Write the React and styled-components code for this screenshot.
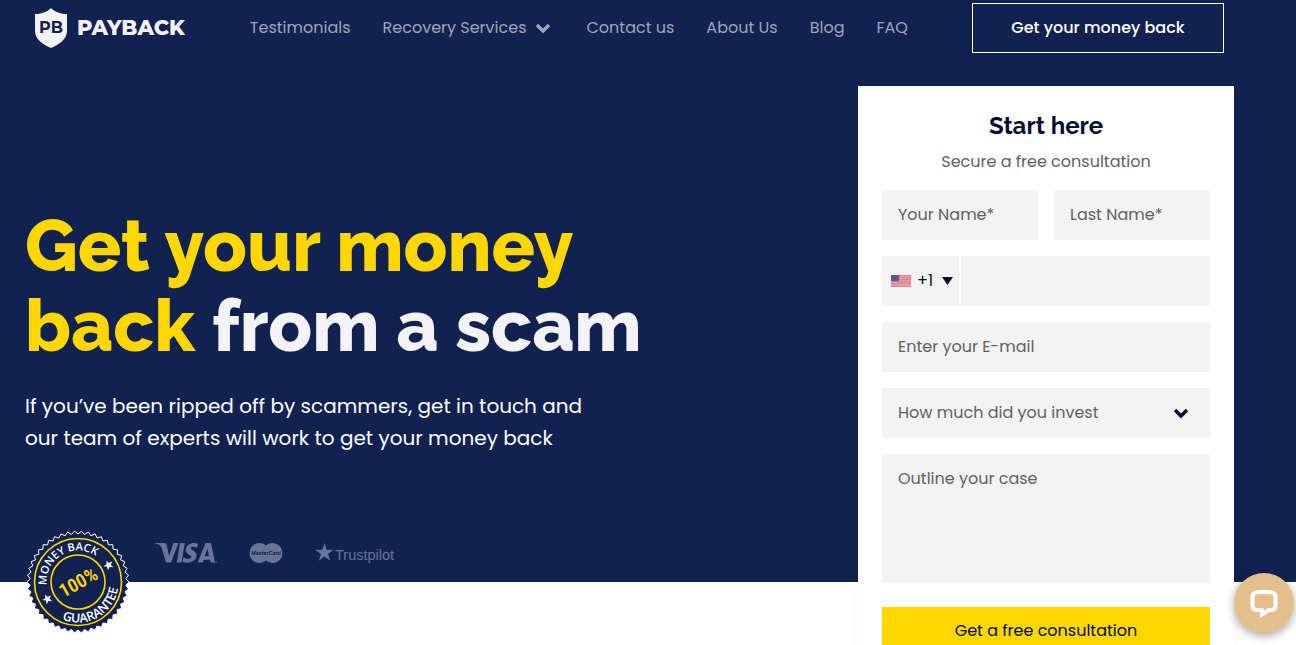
import React from 'react';
import styled, { createGlobalStyle } from 'styled-components';

const colors = {
    navy: '#112150',
    ink: '#000d2e',
    yellow: '#ffd700',
    light: '#f3f3f5',
    field: '#f3f3f3',
    link: '#a0a6b9',
    grey: '#616161',
};

const GlobalStyle = createGlobalStyle`
    * {
        box-sizing: border-box;
    }
    body {
        margin: 0;
        font-family: Poppins, Inter, 'Liberation Sans', sans-serif;
        font-size: 16px;
        line-height: 24px;
        background-color: white;
    }
    input,
    select,
    textarea,
    button {
        font: inherit;
    }
`;

const Page = styled.div`
    height: 100vh;
    overflow: hidden;
`;

const Hero = styled.div`
    background-color: ${colors.navy};
`;

const Header = styled.header`
    padding: 3px 72px 3px 35px;

    display: flex;
    align-items: center;
`;

const LogoLink = styled.a`
    margin-right: 65px;

    display: flex;
    align-items: center;
    gap: 10px;
    color: ${colors.light};
    font-family: Montserrat, Inter, sans-serif;
    font-size: 21px;
    font-weight: 800;
    text-decoration: none;
`;

const Nav = styled.nav`
    display: flex;
    gap: 32px;
`;

const NavLink = styled.a`
    display: flex;
    align-items: center;
    gap: 9px;
    color: ${colors.link};
    text-decoration: none;
    white-space: nowrap;

    svg {
        margin-right: 3px;
    }
`;

const HeaderButton = styled.button`
    width: 252px;
    height: 50px;
    margin-left: auto;

    border: 1px solid white;
    background: none;
    color: white;
    font-weight: 500;
    cursor: pointer;
`;

const Main = styled.main`
    padding: 30px 62px 0 25px;

    display: flex;
    justify-content: space-between;
    align-items: flex-start;
`;

const Intro = styled.div`
    padding-top: 120px;
`;

const Heading = styled.h1`
    margin: 0 0 24px;

    color: ${colors.light};
    font-family: Raleway, Inter, 'Liberation Sans', sans-serif;
    font-size: 72px;
    font-weight: 800;
    line-height: 80px;
`;

const Accent = styled.span`
    color: ${colors.yellow};
`;

const Lead = styled.p`
    margin: 0 0 76px;

    color: white;
    font-size: 20px;
    line-height: 32px;
`;

/* The seal hangs over the lower edge of the hero */
const Trust = styled.div`
    margin-bottom: -52px;

    display: flex;
    align-items: flex-start;
`;

const Brands = styled.div`
    padding: 12px 0 0 25px;

    display: flex;
    align-items: center;
    gap: 32px;
    color: #69749a;
`;

const Card = styled.form`
    width: 376px;
    margin-bottom: -120px;
    padding: 24px;

    display: flex;
    flex-direction: column;
    gap: 16px;
    position: relative;
    background-color: white;
    box-shadow: 0 4px 16px rgba(0, 0, 0, 0.03);
`;

const CardHead = styled.div`
    text-align: center;
    color: ${colors.grey};
`;

const CardTitle = styled.h2`
    margin: 0 0 8px;

    color: ${colors.ink};
    font-family: Raleway, Inter, 'Liberation Sans', sans-serif;
    font-size: 24px;
    font-weight: 700;
    line-height: 32px;
`;

const Row = styled.div`
    display: flex;
    gap: ${(props) => props.$gap}px;
`;

const Input = styled.input`
    width: 100%;
    min-width: 0;
    height: 50px;
    padding: 0 16px 2px;

    border: 0;
    border-radius: 0;
    background-color: ${colors.field};
    color: ${colors.ink};

    &::placeholder {
        color: ${colors.grey};
        opacity: 1;
    }
`;

const Textarea = styled(Input)`
    height: 129px;
    margin-bottom: 8px;
    padding: 13px 16px;

    display: block;
    resize: none;
`;

const SelectBox = styled.div`
    position: relative;
    flex: none;
    width: ${(props) => props.$width};
`;

const Select = styled.select`
    width: 100%;
    height: 50px;
    padding: 0 16px;
    padding-left: ${(props) => (props.$flag ? '35px' : '16px')};

    appearance: none;
    border: 0;
    border-radius: 0;
    background-color: ${colors.field};
    color: ${(props) => (props.$flag ? colors.ink : colors.grey)};
`;

const Mark = styled.span`
    position: absolute;
    top: 0;
    bottom: 0;
    left: ${(props) => props.$left};
    right: ${(props) => props.$right};

    display: flex;
    align-items: center;
    color: ${colors.ink};
    pointer-events: none;
`;

const Submit = styled.button`
    height: 48px;

    border: 0;
    background-color: ${colors.yellow};
    color: ${colors.ink};
    cursor: pointer;
`;

const ChatButton = styled.button`
    position: fixed;
    right: 2px;
    bottom: 12px;
    width: 60px;
    height: 60px;
    padding: 0;

    display: flex;
    justify-content: center;
    align-items: center;
    border: 0;
    border-radius: 50%;
    background-color: #e3c08b;
    box-shadow: 0 3px 10px rgba(0, 0, 0, 0.35);
    cursor: pointer;
`;

const Shield = () => (
    <svg width="32" height="40" viewBox="0 0 32 40" aria-hidden="true">
        <path
            d="M16 0C12 4 6 6 0 6v17c0 8 7 13 16 17 9-4 16-9 16-17V6C26 6 20 4 16 0z"
            fill={colors.light}
        />
        <text
            x="16"
            y="25"
            textAnchor="middle"
            fontFamily="Montserrat, Inter, sans-serif"
            fontSize="16"
            fontWeight="700"
            fill={colors.navy}
        >
            PB
        </text>
    </svg>
);

const Chevron = () => (
    <svg width="16" height="16" viewBox="0 0 16 16" aria-hidden="true">
        <path d="M2 5l6 6 6-6" fill="none" stroke="currentColor" strokeWidth="3.4" />
    </svg>
);

const zigzag = Array.from({ length: 92 }, (_, i) => {
    const angle = (i * Math.PI) / 46;
    const r = i % 2 ? 48 : 51;
    return `${(52 + r * Math.cos(angle)).toFixed(2)},${(52 + r * Math.sin(angle)).toFixed(2)}`;
}).join(' ');

const star = 'M0-5L1.3-1.6 5-1.5 2.1.7 3.1 4.2 0 2.2-3.1 4.2-2.1.7-5-1.5-1.3-1.6z';

const Seal = () => (
    <svg
        width="105"
        height="104"
        viewBox="-1 0 105 104"
        role="img"
        aria-label="Money back guarantee"
    >
        <polygon points={zigzag} fill={colors.navy} stroke="white" strokeWidth="1" />
        <g fill="none" stroke={colors.yellow} strokeWidth="1.6">
            <circle cx="52" cy="52" r="43.5" />
            <circle cx="52" cy="52" r="27" />
        </g>
        <g
            transform="rotate(-29 52 52)"
            fontFamily="'Open Sans', sans-serif"
            fontWeight="600"
            textAnchor="middle"
            fill="white"
        >
            <path id="seal-top" d="M20.5 52a31.5 31.5 0 0 1 63 0" fill="none" />
            <path id="seal-bottom" d="M11.5 52a40.5 40.5 0 0 0 81 0" fill="none" />
            <text fontSize="11">
                <textPath href="#seal-top" startOffset="49%">
                    MONEY BACK
                </textPath>
            </text>
            <text fontSize="12.5">
                <textPath href="#seal-bottom" startOffset="50%">
                    GUARANTEE
                </textPath>
            </text>
            <path d={star} transform="translate(17 52)" />
            <path d={star} transform="translate(87 52)" />
            <text
                x="52"
                y="59"
                fontFamily="'Roboto Condensed', Roboto, sans-serif"
                fontSize="19"
                fontWeight="600"
                fill={colors.yellow}
            >
                100%
            </text>
        </g>
    </svg>
);

const Visa = () => (
    <svg width="62" height="22" viewBox="0 0 62 22" fill="currentColor" role="img" aria-label="Visa">
        <path d="M0 1h9c1.6 0 2.4.6 2.8 2.200L14 14 18.500 1h5L16 20.500h-5L6.500 5.500C5.500 3.300 3 2 0 1.600z" />
        <path d="M25 1h4.800l-3.300 19.500h-4.800z" />
        <path d="M43 1.800l-.8 4c-3-1.400-6.200-1.300-6.300.4 0 2 6 2.700 5.600 7.600-.4 5.700-7.500 8.300-14 6l.8-4.200c3.500 1.800 7.700 1.600 8-.4.200-2.200-6-2.600-5.500-7.500.5-5.600 6.800-8.200 12.200-5.900z" />
        <path d="M51 1h5l4 19.500h-4.500l-.5-2.700h-6.200l-1.200 2.700h-5L50 2.600c.3-.8.6-1.600 1-1.600zm1.500 5.500l-2.800 7.700h4.300z" />
        <circle cx="61" cy="20" r=".7" />
    </svg>
);

const MasterCard = () => (
    <svg width="34" height="22" viewBox="0 0 34 22" role="img" aria-label="MasterCard">
        <path
            d="M17 3.400a10 10 0 1 0 0 15.200 10 10 0 1 0 0-15.200z"
            fill="currentColor"
        />
        <text
            x="17"
            y="13"
            textAnchor="middle"
            fontFamily="'Liberation Sans', sans-serif"
            fontSize="5.4"
            fontWeight="700"
            fontStyle="italic"
            fill={colors.navy}
        >
            MasterCard
        </text>
    </svg>
);

const Trustpilot = () => (
    <svg width="82" height="22" viewBox="0 0 82 22" fill="currentColor" role="img" aria-label="Trustpilot">
        <path d="M9.500 1l2.200 6.700h7.100L13 11.900l2.200 6.900-5.700-4.200-5.700 4.200L6 11.900.2 7.700h7.100z" />
        <text x="20" y="18" fontFamily="'Liberation Sans', sans-serif" fontSize="14.5">
            Trustpilot
        </text>
    </svg>
);

const Flag = () => (
    <svg width="20" height="12" viewBox="0 0 20 12" aria-hidden="true">
        <rect width="20" height="12" fill="#ea9ea6" />
        <path
            d="M0 .5h20M0 2.500h20M0 4.500h20M0 6.500h20M0 8.500h20M0 11.500h20"
            stroke="#d9808a"
        />
        <rect width="8" height="6" fill="#5b5989" />
    </svg>
);

const ChatIcon = () => (
    <svg width="30" height="30" viewBox="0 0 30 30" aria-hidden="true">
        <path
            d="M7.500 4.500Q15 3.200 22.500 4.500 26.500 5 26.500 9v8.500q0 4-4 4.500l-3.300.3L13 26.500v-4.200l-5.500-.3q-4-.5-4-4.500V9q0-4 4-4.500z"
            fill="none"
            stroke="white"
            strokeWidth="4"
        />
    </svg>
);

const links = ['Testimonials', 'Recovery Services', 'Contact us', 'About Us', 'Blog', 'FAQ'];

const App = () => (
    <Page>
        <GlobalStyle />
        <Hero>
            <Header>
                <LogoLink href="#home">
                    <Shield />
                    PAYBACK
                </LogoLink>
                <Nav>
                    {links.map((name) => (
                        <NavLink key={name} href="#nav">
                            {name}
                            {name === 'Recovery Services' && <Chevron />}
                        </NavLink>
                    ))}
                </Nav>
                <HeaderButton type="button">Get your money back</HeaderButton>
            </Header>
            <Main>
                <Intro>
                    <Heading>
                        <Accent>
                            Get your money
                            <br />
                            back
                        </Accent>{' '}
                        from a scam
                    </Heading>
                    <Lead>
                        If you’ve been ripped off by scammers, get in touch and
                        <br />
                        our team of experts will work to get your money back
                    </Lead>
                    <Trust>
                        <Seal />
                        <Brands>
                            <Visa />
                            <MasterCard />
                            <Trustpilot />
                        </Brands>
                    </Trust>
                </Intro>
                <Card>
                    <CardHead>
                        <CardTitle>Start here</CardTitle>
                        Secure a free consultation
                    </CardHead>
                    <Row $gap={16}>
                        <Input aria-label="Your Name" placeholder="Your Name*" />
                        <Input aria-label="Last Name" placeholder="Last Name*" />
                    </Row>
                    <Row $gap={2}>
                        <SelectBox $width="77px">
                            <Select $flag aria-label="Country code">
                                <option>+1</option>
                            </Select>
                            <Mark $left="9px">
                                <Flag />
                            </Mark>
                            <Mark $right="6px">
                                <svg width="11" height="8" viewBox="0 0 11 8" aria-hidden="true">
                                    <path d="M0 0h11L5.500 8z" fill="currentColor" />
                                </svg>
                            </Mark>
                        </SelectBox>
                        <Input type="tel" aria-label="Phone" />
                    </Row>
                    <Input type="email" aria-label="E-mail" placeholder="Enter your E-mail" />
                    <SelectBox $width="100%">
                        <Select aria-label="How much did you invest">
                            <option>How much did you invest</option>
                        </Select>
                        <Mark $right="21px">
                            <Chevron />
                        </Mark>
                    </SelectBox>
                    <Textarea as="textarea" aria-label="Outline your case" placeholder="Outline your case" />
                    <Submit type="submit">Get a free consultation</Submit>
                </Card>
            </Main>
        </Hero>
        <ChatButton type="button" aria-label="Open chat">
            <ChatIcon />
        </ChatButton>
    </Page>
);

export default App;
